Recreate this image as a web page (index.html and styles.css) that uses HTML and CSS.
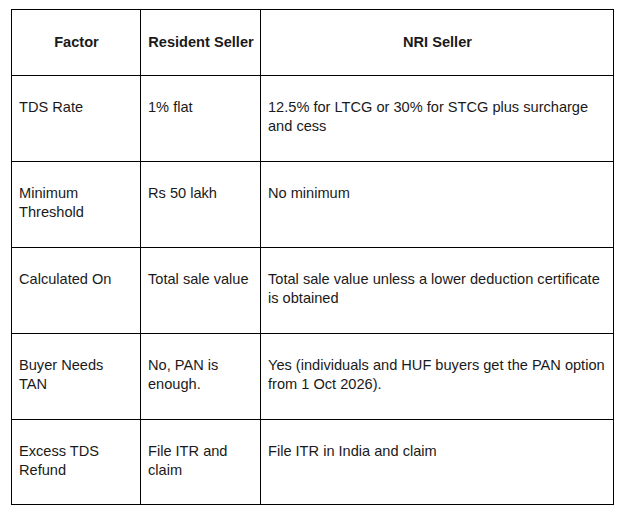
FILE: index.html
```html
<!DOCTYPE html>
<html>
<head>
<meta charset="utf-8">
<link rel="stylesheet" href="styles.css">
</head>
<body>
<table class="cmp">
  <colgroup>
    <col class="c1"><col class="c2"><col class="c3">
  </colgroup>
  <thead>
    <tr class="head">
      <th>Factor</th>
      <th>Resident Seller</th>
      <th>NRI Seller</th>
    </tr>
  </thead>
  <tbody>
    <tr>
      <td>TDS Rate</td>
      <td>1% flat</td>
      <td>12.5% for LTCG or 30% for STCG plus surcharge and cess</td>
    </tr>
    <tr>
      <td>Minimum Threshold</td>
      <td>Rs 50 lakh</td>
      <td>No minimum</td>
    </tr>
    <tr>
      <td>Calculated On</td>
      <td>Total sale value</td>
      <td>Total sale value unless a lower deduction certificate is obtained</td>
    </tr>
    <tr>
      <td>Buyer Needs TAN</td>
      <td>No, PAN is enough.</td>
      <td>Yes (individuals and HUF buyers get the PAN option from 1 Oct 2026).</td>
    </tr>
    <tr class="last">
      <td>Excess TDS Refund</td>
      <td>File ITR and claim</td>
      <td>File ITR in India and claim</td>
    </tr>
  </tbody>
</table>
</body>
</html>
```
FILE: styles.css
```css
html, body {
  margin: 0;
  padding: 0;
  background: #ffffff;
}
body {
  padding: 9px 0 0 11px;
  font-family: "Liberation Sans", Arial, sans-serif;
  font-size: 14.6px;
  color: #1a1a1a;
}
.cmp {
  border-collapse: collapse;
  table-layout: fixed;
  width: 602px;
}
.c1 { width: 129px; }
.c2 { width: 120px; }
.c3 { width: 353px; }
.cmp th, .cmp td {
  border: 1px solid #000;
  line-height: 19px;
  padding: 0 6px 0 7px;
}
.head th {
  height: 65px;
  font-weight: bold;
  text-align: center;
  vertical-align: middle;
}
.cmp td {
  height: 86px;
  vertical-align: top;
  text-align: left;
  padding-top: 22px;
  box-sizing: border-box;
}
.cmp .last td {
  height: 85px;
}
```
